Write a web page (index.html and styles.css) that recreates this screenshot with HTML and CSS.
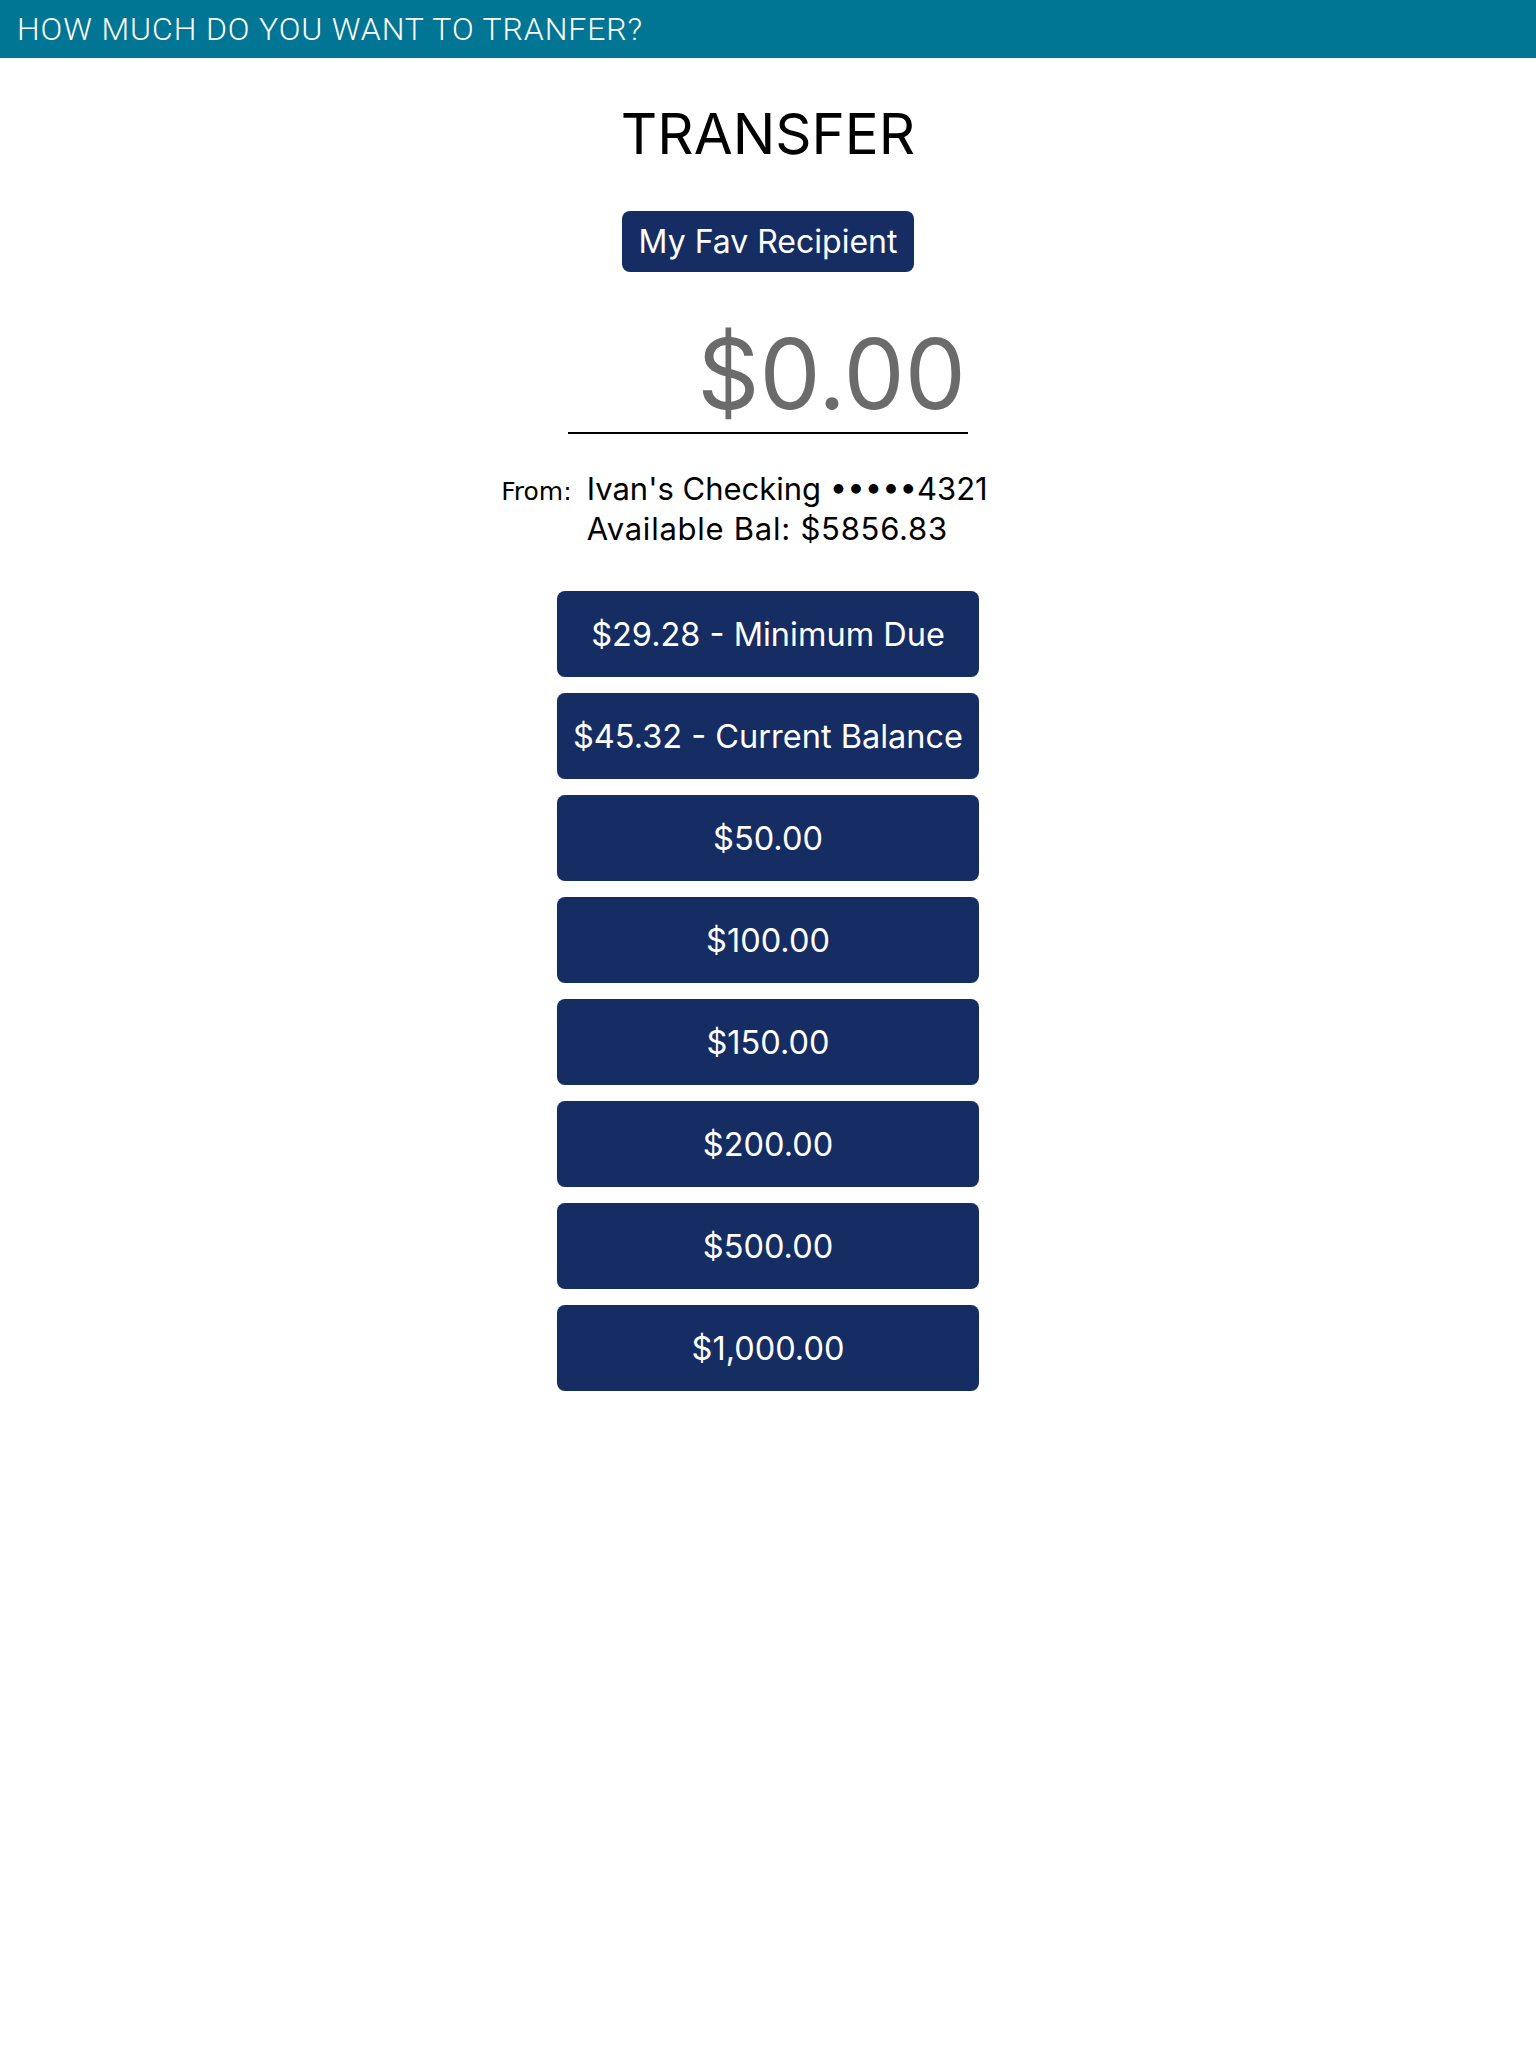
FILE: index.html
```html
<!DOCTYPE html>
<html>
<head>
<meta charset="utf-8">
<link rel="stylesheet" href="styles.css">
</head>
<body>
<header class="topbar">HOW MUCH DO YOU WANT TO TRANFER?</header>
<main class="content">
  <h1 class="title">TRANSFER</h1>
  <button class="fav">My Fav Recipient</button>
  <div class="amount">$0.00</div>
  <div class="from">
    <span class="from-label">From:</span>
    <div class="from-acct">
      <div>Ivan's Checking •••••4321</div>
      <div class="bal">Available Bal: $5856.83</div>
    </div>
  </div>
  <div class="options">
    <button class="opt">$29.28 - Minimum Due</button>
    <button class="opt">$45.32 - Current Balance</button>
    <button class="opt">$50.00</button>
    <button class="opt">$100.00</button>
    <button class="opt">$150.00</button>
    <button class="opt">$200.00</button>
    <button class="opt">$500.00</button>
    <button class="opt">$1,000.00</button>
  </div>
</main>
</body>
</html>
```
FILE: styles.css
```css
html, body {
  margin: 0;
  padding: 0;
  background: #ffffff;
}
body {
  font-family: Inter, "Noto Sans", sans-serif;
  color: #000;
}
.topbar {
  height: 58px;
  background: #007694;
  color: #ffffff;
  font-family: Roboto, sans-serif;
  font-size: 32px;
  font-weight: 300;
  letter-spacing: 0.9px;
  line-height: 58px;
  padding-left: 17px;
  box-sizing: border-box;
}
.content {
  display: flex;
  flex-direction: column;
  align-items: center;
}
.title {
  margin: 47px 0 0;
  font-size: 56.5px;
  font-weight: 400;
  line-height: 57px;
}
.fav {
  margin-top: 49px;
  height: 61px;
  padding: 0 17px;
  border: none;
  border-radius: 8px;
  background: #162d64;
  color: #ffffff;
  font-family: Inter, sans-serif;
  font-size: 32px;
  line-height: 61px;
}
.amount {
  margin-top: 53px;
  width: 400px;
  box-sizing: border-box;
  padding: 0 2px 10px 0;
  border-bottom: 2px solid #000;
  text-align: right;
  font-size: 97px;
  line-height: 97px;
  color: #6b6b6b;
}
.from {
  margin-top: 35px;
  margin-right: 47px;
  display: flex;
  align-items: baseline;
  gap: 15px;
}
.from-label {
  font-family: "DejaVu Sans", sans-serif;
  font-size: 25px;
  line-height: 40px;
}
.from-acct {
  font-size: 31px;
  line-height: 40px;
}
.bal {
  letter-spacing: 0.75px;
}
.options {
  margin-top: 42px;
  display: flex;
  flex-direction: column;
  gap: 16px;
}
.opt {
  width: 422px;
  height: 86px;
  border: none;
  border-radius: 8px;
  background: #162d64;
  color: #ffffff;
  font-family: Inter, sans-serif;
  font-size: 32.5px;
  padding: 0;
}
```
